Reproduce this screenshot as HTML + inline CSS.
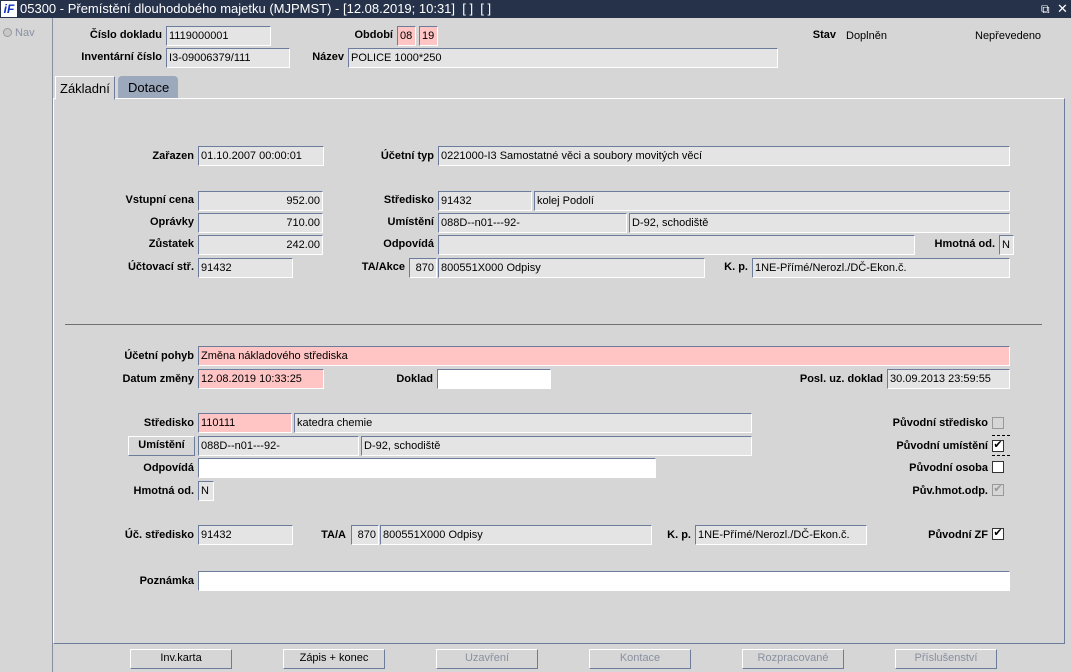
<!DOCTYPE html>
<html><head><meta charset="utf-8"><style>
*{margin:0;padding:0;box-sizing:border-box}
body{width:1071px;height:672px;background:#d6d6d6;position:relative;overflow:hidden;font-family:"Liberation Sans",sans-serif;font-size:11px;color:#000}
.a{position:absolute}
.l{position:absolute;font-weight:bold;white-space:nowrap;text-align:right}
.i{position:absolute;background:#e4e4e4;border:1px solid;border-color:#6e7c9c #fff #fff #6e7c9c;padding:2px 2px 0;white-space:nowrap;overflow:hidden;height:20px;line-height:14px}
.p{background:#ffc4c4}
.w{background:#fff}
.r{text-align:right}
.b{position:absolute;height:20px;border:1px solid;border-color:#fff #6e7c9c #6e7c9c #fff;text-align:center;line-height:17px;background:#d6d6d6}
.g{color:#8890a0}
.cb{position:absolute;width:12px;height:12px;border:1px solid #333;background:#fff}
.t{position:absolute;font-size:11px;white-space:nowrap}
</style></head><body>
<div class="a" style="left:0;top:0;width:1071px;height:18px;background:#26324a;color:#fff;font-size:13px;line-height:18px">
<span class="a" style="left:1px;top:1px;width:16px;height:16px;background:#fff;color:#1030c0;font-weight:bold;font-style:italic;font-size:12px;line-height:16px;text-align:center">iF</span>
<span class="a" style="left:20px;top:0">05300 - Přemístění dlouhodobého majetku (MJPMST) - [12.08.2019; 10:31]&nbsp; [ ]&nbsp; [ ]</span>
<span class="a" style="left:1041px;top:0;font-size:12px">⧉</span><span class="a" style="left:1057px;top:0;font-size:13px">✕</span>
</div>
<div class="a" style="left:52px;top:18px;width:1px;height:654px;background:#8890a0"></div>
<div class="a" style="left:3px;top:27px;width:32px;height:16px;color:#8890a0"><span style="display:inline-block;width:9px;height:9px;border-radius:50%;background:#c8c8c8;border:1px solid #999;vertical-align:-1px"></span> Nav</div>

<div class="l" style="right:909px;top:29px">Číslo dokladu</div><div class="i" style="left:166px;top:26px;width:105px">1119000001</div>
<div class="l" style="right:678px;top:29px">Období</div><div class="i p" style="left:397px;top:26px;width:19px">08</div><div class="i p" style="left:419px;top:26px;width:19px">19</div>
<div class="l" style="right:235px;top:29px">Stav</div><div class="t" style="left:846px;top:30px">Doplněn</div><div class="t" style="left:975px;top:30px">Nepřevedeno</div>
<div class="l" style="right:909px;top:51px">Inventární číslo</div><div class="i" style="left:166px;top:48px;width:124px">I3-09006379/111</div>
<div class="l" style="right:727px;top:51px">Název</div><div class="i" style="left:348px;top:48px;width:430px">POLICE 1000*250</div>

<div class="a" style="left:53px;top:98px;width:1012px;height:546px;border:1px solid;border-color:#fff #6e7c9c #6e7c9c #fff"></div>
<div class="a" style="left:55px;top:76px;width:60px;height:24px;background:#d6d6d6;border:1px solid;border-color:#fff #6e7c9c transparent #fff;font-size:13px;padding:4px 0 0 4px">Základní</div>
<div class="a" style="left:118px;top:76px;width:60px;height:22px;background:#9ca8bc;border-radius:4px 4px 0 0;font-size:13px;padding:4px 0 0 10px">Dotace</div>

<div class="l" style="right:877px;top:150px">Zařazen</div><div class="i" style="left:198px;top:146px;width:126px">01.10.2007 00:00:01</div>
<div class="l" style="right:637px;top:150px">Účetní typ</div><div class="i" style="left:438px;top:146px;width:572px">0221000-I3 Samostatné věci a soubory movitých věcí</div>

<div class="l" style="right:877px;top:194px">Vstupní cena</div><div class="i r" style="left:198px;top:191px;width:125px">952.00</div>
<div class="l" style="right:637px;top:194px">Středisko</div><div class="i" style="left:438px;top:191px;width:94px">91432</div><div class="i" style="left:534px;top:191px;width:476px">kolej Podolí</div>
<div class="l" style="right:877px;top:216px">Oprávky</div><div class="i r" style="left:198px;top:213px;width:125px">710.00</div>
<div class="l" style="right:637px;top:216px">Umístění</div><div class="i" style="left:438px;top:213px;width:189px">088D--n01---92-</div><div class="i" style="left:629px;top:213px;width:381px">D-92, schodiště</div>
<div class="l" style="right:877px;top:238px">Zůstatek</div><div class="i r" style="left:198px;top:235px;width:125px">242.00</div>
<div class="l" style="right:637px;top:238px">Odpovídá</div><div class="i" style="left:438px;top:235px;width:477px"></div>
<div class="l" style="right:76px;top:238px">Hmotná od.</div><div class="i" style="left:999px;top:235px;width:15px">N</div>
<div class="l" style="right:877px;top:261px">Účtovací stř.</div><div class="i" style="left:198px;top:258px;width:95px">91432</div>
<div class="l" style="right:666px;top:261px">TA/Akce</div><div class="i r" style="left:409px;top:258px;width:28px">870</div><div class="i" style="left:438px;top:258px;width:267px">800551X000 Odpisy</div>
<div class="l" style="right:323px;top:261px">K. p.</div><div class="i" style="left:752px;top:258px;width:258px">1NE-Přímé/Nerozl./DČ-Ekon.č.</div>

<div class="a" style="left:65px;top:324px;width:977px;height:1px;background:#707070"></div>

<div class="l" style="right:877px;top:350px">Účetní pohyb</div><div class="i p" style="left:198px;top:346px;width:812px">Změna nákladového střediska</div>
<div class="l" style="right:877px;top:373px">Datum změny</div><div class="i p" style="left:198px;top:369px;width:126px">12.08.2019 10:33:25</div>
<div class="l" style="right:638px;top:373px">Doklad</div><div class="i w" style="left:437px;top:369px;width:114px"></div>
<div class="l" style="right:188px;top:373px">Posl. uz. doklad</div><div class="i" style="left:887px;top:369px;width:123px">30.09.2013 23:59:55</div>

<div class="l" style="right:877px;top:417px">Středisko</div><div class="i p" style="left:198px;top:413px;width:94px">110111</div><div class="i" style="left:294px;top:413px;width:458px">katedra chemie</div>
<div class="b" style="left:128px;top:436px;width:67px;font-weight:bold">Umístění</div><div class="i" style="left:198px;top:436px;width:161px">088D--n01---92-</div><div class="i" style="left:361px;top:436px;width:391px">D-92, schodiště</div>
<div class="l" style="right:877px;top:462px">Odpovídá</div><div class="i w" style="left:198px;top:458px;width:458px"></div>
<div class="l" style="right:877px;top:485px">Hmotná od.</div><div class="i" style="left:198px;top:481px;width:16px">N</div>

<div class="l" style="right:83px;top:417px">Původní středisko</div><div class="cb" style="left:992px;top:417px;background:#d6d6d6;border-color:#999"></div>
<div class="l" style="right:83px;top:440px">Původní umístění</div><div class="cb" style="left:992px;top:440px;font-size:11px;line-height:9px;text-align:center">✔</div>
<div class="a" style="left:992px;top:435px;width:18px;border-top:1px dashed #000"></div><div class="a" style="left:992px;top:455px;width:18px;border-top:1px dashed #000"></div>
<div class="l" style="right:83px;top:462px">Původní osoba</div><div class="cb" style="left:992px;top:461px"></div>
<div class="l" style="right:83px;top:485px">Pův.hmot.odp.</div><div class="cb" style="left:992px;top:484px;background:#d6d6d6;border-color:#999;color:#999;line-height:9px;text-align:center">✔</div>

<div class="l" style="right:877px;top:529px">Úč. středisko</div><div class="i" style="left:198px;top:525px;width:95px">91432</div>
<div class="l" style="right:725px;top:529px">TA/A</div><div class="i r" style="left:351px;top:525px;width:28px">870</div><div class="i" style="left:380px;top:525px;width:272px">800551X000 Odpisy</div>
<div class="l" style="right:380px;top:529px">K. p.</div><div class="i" style="left:695px;top:525px;width:172px">1NE-Přímé/Nerozl./DČ-Ekon.č.</div>
<div class="l" style="right:83px;top:529px">Původní ZF</div><div class="cb" style="left:992px;top:528px;line-height:9px;text-align:center">✔</div>

<div class="l" style="right:877px;top:575px">Poznámka</div><div class="i w" style="left:198px;top:571px;width:812px"></div>

<div class="b" style="left:130px;top:649px;width:102px">Inv.karta</div>
<div class="b" style="left:283px;top:649px;width:102px">Zápis + konec</div>
<div class="b g" style="left:436px;top:649px;width:102px">Uzavření</div>
<div class="b g" style="left:589px;top:649px;width:102px">Kontace</div>
<div class="b g" style="left:742px;top:649px;width:102px">Rozpracované</div>
<div class="b g" style="left:895px;top:649px;width:102px">Příslušenství</div>
</body></html>
